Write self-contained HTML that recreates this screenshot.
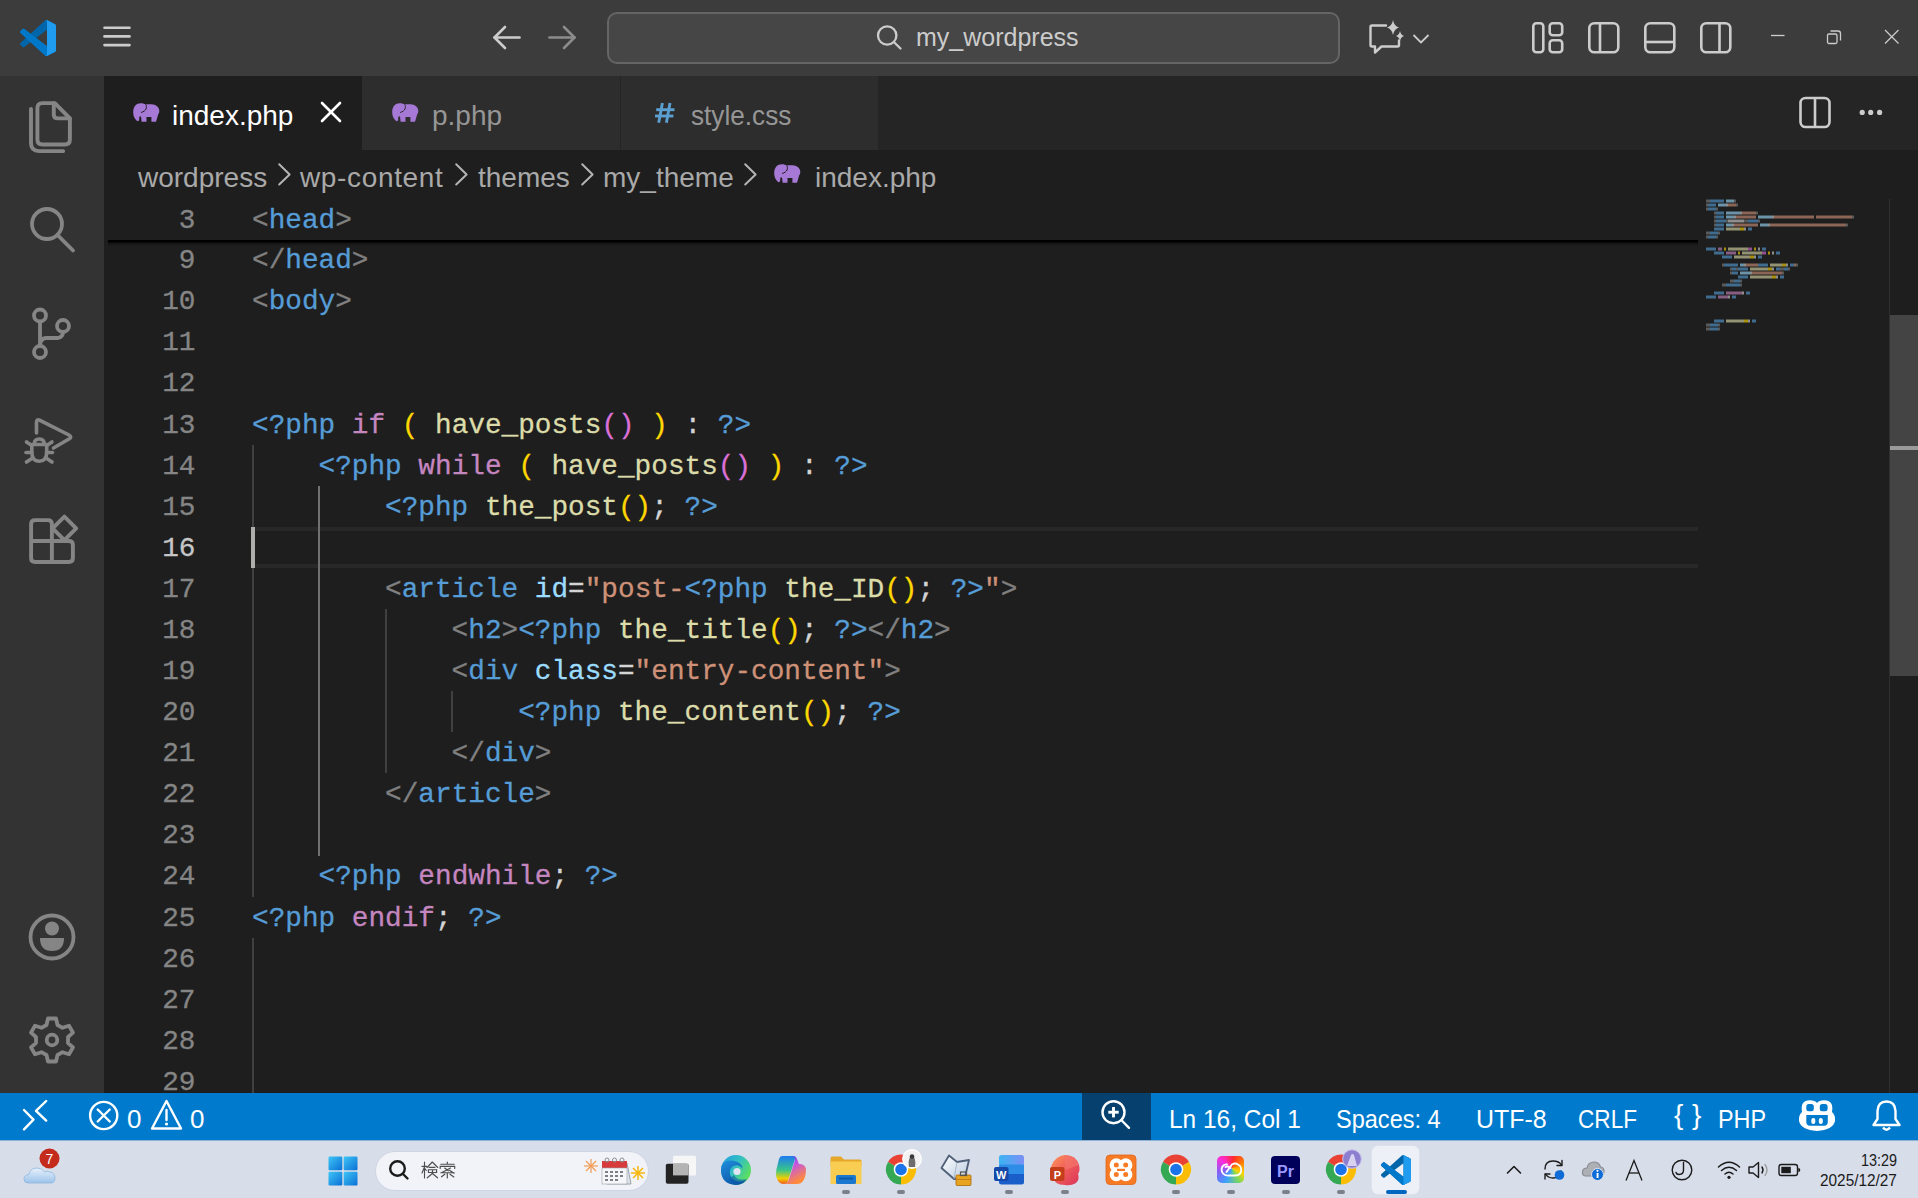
<!DOCTYPE html><html><head><meta charset="utf-8"><title>VS Code</title><style>html,body{margin:0;padding:0;width:1918px;height:1198px;overflow:hidden;background:#1e1e1e;font-family:"Liberation Sans",sans-serif;}
.a{position:absolute;}
svg{position:absolute;overflow:visible;}
#title{left:0;top:0;width:1918px;height:76px;background:#3c3c3c;}
#act{left:0;top:76px;width:104px;height:1017px;background:#333333;}
#tabbar{left:104px;top:76px;width:1814px;height:74px;background:#252526;}
.tab{top:76px;height:74px;background:#2d2d2d;}
.tabtxt{top:97px;font-size:28px;line-height:38px;color:#969696;white-space:pre;}
#bc{left:104px;top:150px;width:1814px;height:48px;background:#1e1e1e;}
.bct{top:158.5px;font-size:28px;line-height:38px;color:#a9a9a9;white-space:pre;}
#ed{left:104px;top:198px;width:1814px;height:895px;background:#1e1e1e;overflow:hidden;}
.ln{position:absolute;left:0;-webkit-text-stroke:0.3px;width:91.5px;text-align:right;font-family:"Liberation Mono",monospace;font-size:27.72px;line-height:41.04px;color:#858585;white-space:pre;}
.ln.cur{color:#c6c6c6;}
.code{position:absolute;left:148px;-webkit-text-stroke:0.3px;font-family:"Liberation Mono",monospace;font-size:27.72px;line-height:41.04px;color:#d4d4d4;white-space:pre;}
.guide{position:absolute;width:2px;background:#404040;}
.guide.act{background:#707070;}
#curline{position:absolute;left:148px;width:1446px;height:33px;border-top:4px solid #282828;border-bottom:4px solid #282828;}
#cursor{position:absolute;left:147px;width:4px;height:41px;background:#aeafad;}
#sticky{position:absolute;left:0;top:0;width:1594px;height:42px;background:#1e1e1e;}
#stickyshadow{position:absolute;left:4px;top:42px;width:1590px;height:6px;background:linear-gradient(#000 0,#000 1.5px,rgba(0,0,0,0.35) 3.5px,rgba(0,0,0,0) 6px);}
#status{left:0;top:1093px;width:1918px;height:47px;background:#007acc;}
.st{top:1101.5px;font-size:26px;line-height:34px;color:#fff;white-space:pre;}
#taskbar{left:0;top:1140px;width:1918px;height:58px;background:#d7dde9;}
</style></head><body>
<!-- TITLE BAR -->
<div class="a" id="title"></div>
<svg style="left:20px;top:20px" width="36" height="36" viewBox="0 0 100 100">
<path fill="#0065a9" d="M96.46 10.8L75.86.9C73.47-.25 70.62.24 68.74 2.12L29.36 38.04 12.19 25.01c-1.6-1.21-3.84-1.11-5.32.24l-5.51 5.01c-1.82 1.65-1.82 4.51 0 6.16L16.25 50 1.36 63.58c-1.82 1.65-1.82 4.51 0 6.16l5.51 5.01c1.48 1.35 3.72 1.45 5.32.24l17.17-13.03 39.38 35.92c1.88 1.88 4.73 2.37 7.12 1.22l20.59-9.91c2.16-1.04 3.54-3.23 3.54-5.63V16.41c0-2.4-1.38-4.59-3.54-5.63zM75.02 72.7L45.11 50l29.91-22.7v45.4z"/>
<path fill="#007acc" d="M96.46 89.2L75.86 99.1c-2.38 1.15-5.24.66-7.12-1.22L1.36 36.42c-1.82-1.65-1.82-4.51 0-6.16l5.51-5.01c1.48-1.35 3.72-1.45 5.32-.24l81.3 61.68c2.72 2.06 6.64.12 6.64-3.29V83.2c0 2.4-1.38 4.59-3.54 5.63z" opacity="0.9"/>
<path fill="#1f9cf0" d="M75.86 99.13c-2.38 1.15-5.24.66-7.12-1.22 2.32 2.32 6.28.68 6.28-2.6V4.69c0-3.28-3.96-4.92-6.28-2.6 1.88-1.88 4.73-2.37 7.12-1.22l20.59 9.9c2.16 1.04 3.54 3.23 3.54 5.63v67.17c0 2.4-1.38 4.59-3.54 5.63l-20.59 9.93z"/>
</svg>
<svg style="left:100px;top:24px" width="34" height="26" viewBox="0 0 34 26"><g stroke="#cccccc" stroke-width="2.6" stroke-linecap="round"><line x1="4.5" y1="3.8" x2="29.5" y2="3.8"/><line x1="4.5" y1="12.4" x2="29.5" y2="12.4"/><line x1="4.5" y1="21.1" x2="29.5" y2="21.1"/></g></svg>
<svg style="left:490px;top:24px" width="34" height="28" viewBox="0 0 34 28"><g stroke="#cccccc" stroke-width="2.6" stroke-linecap="round" stroke-linejoin="round" fill="none"><line x1="4.5" y1="13.5" x2="29.5" y2="13.5"/><polyline points="15,3 4.5,13.5 15,24"/></g></svg>
<svg style="left:546px;top:24px" width="34" height="28" viewBox="0 0 34 28"><g stroke="#8c8c8c" stroke-width="2.6" stroke-linecap="round" stroke-linejoin="round" fill="none"><line x1="3.5" y1="13.5" x2="28.5" y2="13.5"/><polyline points="18,3 28.5,13.5 18,24"/></g></svg>
<div class="a" style="left:607px;top:12px;width:729px;height:48px;border:2px solid #656565;border-radius:10px;background:#464646;"></div>
<svg style="left:872px;top:21px" width="34" height="32" viewBox="0 0 34 32"><g stroke="#cccccc" stroke-width="2.3" fill="none" stroke-linecap="round"><circle cx="15.2" cy="14.5" r="9.2"/><line x1="21.8" y1="21" x2="28.5" y2="27.5"/></g></svg>
<div class="a" style="left:916px;top:20px;font-size:25px;line-height:34px;color:#cccccc;white-space:pre;">my_wordpress</div>
<!-- chat icon -->
<svg style="left:1366px;top:18px" width="70" height="38" viewBox="0 0 70 38"><g stroke="#cccccc" stroke-width="2.4" fill="none" stroke-linejoin="round" stroke-linecap="round"><path d="M20 7.5 H6 Q4.5 7.5 4.5 9 V27 Q4.5 28.5 6 28.5 H9 L9 34.5 L15.5 28.5 H31.5 Q33 28.5 33 27 V22.5"/></g><polyline points="47.5,17 55,24.5 62.5,17" stroke="#cccccc" stroke-width="1.8" fill="none"/>
<path fill="#cccccc" d="M27 2 Q28 8 33 9.5 Q28 11 27 17 Q26 11 21 9.5 Q26 8 27 2Z"/>
<path fill="#cccccc" d="M34 13 Q34.8 17 38 18 Q34.8 19 34 23 Q33.2 19 30 18 Q33.2 17 34 13Z"/></svg>
<!-- layout icons -->
<svg style="left:1530px;top:20px" width="36" height="36" viewBox="0 0 36 36"><g stroke="#cccccc" stroke-width="2.6" fill="none"><rect x="3.3" y="3.3" width="10" height="29" rx="3"/><rect x="19.7" y="3.3" width="12.5" height="12" rx="3"/><rect x="19.7" y="20.3" width="12.5" height="12" rx="3"/></g></svg>
<svg style="left:1586px;top:20px" width="36" height="36" viewBox="0 0 36 36"><g stroke="#cccccc" stroke-width="2.6" fill="none"><rect x="3.3" y="3.3" width="29" height="29" rx="5"/><line x1="14" y1="3.3" x2="14" y2="32.3"/></g></svg>
<svg style="left:1642px;top:20px" width="36" height="36" viewBox="0 0 36 36"><g stroke="#cccccc" stroke-width="2.6" fill="none"><rect x="3.3" y="3.3" width="29" height="29" rx="5"/><line x1="3.3" y1="22" x2="32.3" y2="22"/></g></svg>
<svg style="left:1698px;top:20px" width="36" height="36" viewBox="0 0 36 36"><g stroke="#cccccc" stroke-width="2.6" fill="none"><rect x="3.3" y="3.3" width="29" height="29" rx="5"/><line x1="21.5" y1="3.3" x2="21.5" y2="32.3"/></g></svg>
<!-- window controls -->
<svg style="left:1766px;top:26px" width="24" height="20" viewBox="0 0 24 20"><line x1="5" y1="9.5" x2="18.5" y2="9.5" stroke="#cccccc" stroke-width="1.3"/></svg>
<svg style="left:1822px;top:25px" width="24" height="24" viewBox="0 0 24 24"><g stroke="#cccccc" stroke-width="1.3" fill="none"><rect x="5.5" y="9" width="9.5" height="9.5" rx="1.5"/><path d="M8.5 6 H16 Q18.5 6 18.5 8.5 V15.5"/></g></svg>
<svg style="left:1879px;top:24px" width="26" height="26" viewBox="0 0 26 26"><g stroke="#cccccc" stroke-width="1.3"><line x1="6" y1="6" x2="19.5" y2="19.5"/><line x1="19.5" y1="6" x2="6" y2="19.5"/></g></svg>

<!-- ACTIVITY BAR -->
<div class="a" id="act"></div>
<svg style="left:24px;top:98px" width="56" height="58" viewBox="0 0 56 58"><g stroke="#858585" stroke-width="3.9" fill="none" stroke-linejoin="round" stroke-linecap="round"><path d="M30.8 5.1 H18.4 Q13.4 5.1 13.4 10.1 V41.5 Q13.4 46.5 18.4 46.5 H40.9 Q45.9 46.5 45.9 41.5 V20.4 Z"/><path d="M29.8 5.1 V16.4 Q29.8 20.4 33.8 20.4 H45.9"/><path d="M7 11 V45.1 Q7 53.1 15 53.1 H39.2"/></g></svg>
<svg style="left:24px;top:203px" width="56" height="56" viewBox="0 0 56 56"><g stroke="#858585" stroke-width="3.8" fill="none" stroke-linecap="round"><circle cx="23" cy="21" r="15"/><line x1="33.5" y1="32" x2="49" y2="47.5"/></g></svg>
<svg style="left:24px;top:306px" width="56" height="58" viewBox="0 0 56 58"><g stroke="#858585" stroke-width="3.8" fill="none"><circle cx="16" cy="9.5" r="6"/><circle cx="16" cy="46" r="6"/><circle cx="39" cy="20" r="6"/><path d="M16 15.5 V40"/><path d="M39 26 Q39 31 34 32 H22 Q16 32.5 16 40"/></g></svg>
<svg style="left:22px;top:414px" width="60" height="54" viewBox="0 0 60 54"><g stroke="#858585" stroke-width="3.6" fill="none" stroke-linejoin="round" stroke-linecap="round"><path d="M14.5 19 V8.5 Q14.5 4.5 18 6.3 L47 21 Q50.5 23 47 25 L31.5 34"/><path d="M9.8 30.5 H24.7 V38 Q24.7 47.2 17.25 47.2 Q9.8 47.2 9.8 38 Z"/><path d="M12.3 30 Q12.3 25 17.25 25 Q22.2 25 22.2 30"/><line x1="4.5" y1="28" x2="9.8" y2="31.5"/><line x1="30" y1="28" x2="24.7" y2="31.5"/><line x1="4" y1="38.5" x2="9.8" y2="38.5"/><line x1="30.5" y1="38.5" x2="24.7" y2="38.5"/><line x1="4.5" y1="48" x2="9.8" y2="44.5"/><line x1="30" y1="48" x2="24.7" y2="44.5"/></g></svg>
<svg style="left:24px;top:512px" width="58" height="56" viewBox="0 0 58 56"><g stroke="#858585" stroke-width="3.9" fill="none" stroke-linejoin="round"><path d="M27.9 29 H44.9 Q48.9 29 48.9 33 V46 Q48.9 50 44.9 50 H11.1 Q7.1 50 7.1 46 V12.1 Q7.1 8.1 11.1 8.1 H23.9 Q27.9 8.1 27.9 12.1 V50 M7.1 29 H27.9"/><path d="M40.4 4.6 L52.2 16.4 L40.4 28.2 L28.6 16.4 Z"/></g></svg>
<svg style="left:24px;top:909px" width="56" height="56" viewBox="0 0 56 56"><g fill="none" stroke="#858585" stroke-width="3.8"><circle cx="28" cy="28" r="21.5"/></g><g fill="#858585"><circle cx="28" cy="19.5" r="7"/><path d="M16 29 H40 Q40 42 28 42 Q16 42 16 29 Z"/></g></svg>
<svg style="left:24px;top:1012px" width="56" height="56" viewBox="0 0 56 56"><g fill="none" stroke="#858585" stroke-width="3.8" stroke-linejoin="round"><path d="M24 6.5 H32 L33.5 13 L38.5 15.8 L45 13.7 L49 20.6 L44 25 V31 L49 35.4 L45 42.3 L38.5 40.2 L33.5 43 L32 49.5 H24 L22.5 43 L17.5 40.2 L11 42.3 L7 35.4 L12 31 V25 L7 20.6 L11 13.7 L17.5 15.8 L22.5 13 Z"/><circle cx="28" cy="28" r="5.3"/></g></svg>

<!-- TABS -->
<div class="a" id="tabbar"></div>
<div class="a tab" style="left:104px;width:258px;background:#1e1e1e;"></div>
<div class="a tab" style="left:362px;width:258px;"></div>
<div class="a tab" style="left:621px;width:257px;"></div>
<svg style="left:133px;top:103px" width="26" height="19" viewBox="0 0 26 19"><path fill="#a679d6" d="M0.2 9C0.2 3.5 3.5 0.3 7.6 0.3C10 0.3 11.8 0.8 12.8 1.8C14 1.2 15.5 1.2 18.4 1.3C23 1.5 26.3 4 26.3 8C26.3 9.5 25.8 10.5 25.3 11L23 18.8L18.4 18.8L18.4 13.9L13.5 13.9L13.5 18.8L8.6 18.8L8.1 14C7.5 13 6.6 13 6.3 14L6.2 16.5C6 18.3 4.5 18.6 3.6 17.6C1.2 15.5 0.2 12.5 0.2 9Z"/><path d="M12.8 1.8C14.2 4 13.6 8 8.1 9.5" stroke="#1e1e1e" stroke-width="1" fill="none"/></svg>
<div class="a tabtxt" style="left:172px;color:#ffffff;">index.php</div>
<svg style="left:316px;top:98px" width="30" height="30" viewBox="0 0 30 30"><g stroke="#ffffff" stroke-width="2.6" stroke-linecap="round"><line x1="6" y1="5" x2="24" y2="23"/><line x1="24" y1="5" x2="6" y2="23"/></g></svg>
<svg style="left:392px;top:103px" width="26" height="19" viewBox="0 0 26 19"><path fill="#a679d6" d="M0.2 9C0.2 3.5 3.5 0.3 7.6 0.3C10 0.3 11.8 0.8 12.8 1.8C14 1.2 15.5 1.2 18.4 1.3C23 1.5 26.3 4 26.3 8C26.3 9.5 25.8 10.5 25.3 11L23 18.8L18.4 18.8L18.4 13.9L13.5 13.9L13.5 18.8L8.6 18.8L8.1 14C7.5 13 6.6 13 6.3 14L6.2 16.5C6 18.3 4.5 18.6 3.6 17.6C1.2 15.5 0.2 12.5 0.2 9Z"/><path d="M12.8 1.8C14.2 4 13.6 8 8.1 9.5" stroke="#2d2d2d" stroke-width="1" fill="none"/></svg>
<div class="a tabtxt" style="left:432px;">p.php</div>
<svg style="left:652px;top:100px" width="26" height="26" viewBox="0 0 26 26"><g stroke="#5a9fcf" stroke-width="2.9" stroke-linecap="butt"><line x1="10.4" y1="3" x2="6.7" y2="22.7"/><line x1="18" y1="3" x2="14.4" y2="22.7"/><line x1="4.2" y1="9.7" x2="22.5" y2="9.7"/><line x1="3" y1="16" x2="21.4" y2="16"/></g></svg>
<div class="a tabtxt" style="left:691px;transform:scaleX(0.935);transform-origin:0 0;">style.css</div>
<svg style="left:1796px;top:94px" width="38" height="38" viewBox="0 0 38 38"><g stroke="#cccccc" stroke-width="2.6" fill="none"><rect x="4.5" y="4" width="29" height="29" rx="5"/><line x1="19" y1="4" x2="19" y2="33"/></g></svg>
<svg style="left:1856px;top:106px" width="30" height="14" viewBox="0 0 30 14"><g fill="#cccccc"><circle cx="6.2" cy="6.4" r="2.6"/><circle cx="14.7" cy="6.4" r="2.6"/><circle cx="23.6" cy="6.4" r="2.6"/></g></svg>

<!-- BREADCRUMBS -->
<div class="a" id="bc"></div>
<div class="a bct" style="left:138px;">wordpress</div>
<div class="a bct" style="left:300px;letter-spacing:0.65px;">wp-content</div>
<div class="a bct" style="left:478px;">themes</div>
<div class="a bct" style="left:603px;">my_theme</div>
<div class="a bct" style="left:815px;">index.php</div>
<svg style="left:270px;top:162px" width="30" height="30" viewBox="0 0 30 30"><polyline points="9.2,2.2 19.6,12.5 9.2,22.5" stroke="#b4b4b4" stroke-width="2" fill="none" stroke-linecap="round" stroke-linejoin="round"/></svg>
<svg style="left:447px;top:162px" width="30" height="30" viewBox="0 0 30 30"><polyline points="9.2,2.2 19.6,12.5 9.2,22.5" stroke="#b4b4b4" stroke-width="2" fill="none" stroke-linecap="round" stroke-linejoin="round"/></svg>
<svg style="left:573px;top:162px" width="30" height="30" viewBox="0 0 30 30"><polyline points="9.2,2.2 19.6,12.5 9.2,22.5" stroke="#b4b4b4" stroke-width="2" fill="none" stroke-linecap="round" stroke-linejoin="round"/></svg>
<svg style="left:736px;top:162px" width="30" height="30" viewBox="0 0 30 30"><polyline points="9.2,2.2 19.6,12.5 9.2,22.5" stroke="#b4b4b4" stroke-width="2" fill="none" stroke-linecap="round" stroke-linejoin="round"/></svg>
<svg style="left:774px;top:164px" width="26" height="19" viewBox="0 0 26 19"><path fill="#a679d6" d="M0.2 9C0.2 3.5 3.5 0.3 7.6 0.3C10 0.3 11.8 0.8 12.8 1.8C14 1.2 15.5 1.2 18.4 1.3C23 1.5 26.3 4 26.3 8C26.3 9.5 25.8 10.5 25.3 11L23 18.8L18.4 18.8L18.4 13.9L13.5 13.9L13.5 18.8L8.6 18.8L8.1 14C7.5 13 6.6 13 6.3 14L6.2 16.5C6 18.3 4.5 18.6 3.6 17.6C1.2 15.5 0.2 12.5 0.2 9Z"/><path d="M12.8 1.8C14.2 4 13.6 8 8.1 9.5" stroke="#1e1e1e" stroke-width="1" fill="none"/></svg>

<div class="a" id="ed">
<div id="curline" style="top:329.00px"></div>
<div class="guide" style="left:147.5px;top:246.84px;height:451.88px"></div>
<div class="guide" style="left:147.5px;top:739.80px;height:164.32px"></div>
<div class="guide act" style="left:214.0px;top:287.92px;height:369.72px"></div>
<div class="guide" style="left:280.5px;top:411.16px;height:164.32px"></div>
<div class="guide" style="left:347.0px;top:493.32px;height:41.08px"></div>
<div class="ln" style="top:42.24px">9</div>
<div class="code" style="top:42.24px"><span style="color:#808080">&lt;/</span><span style="color:#569cd6">head</span><span style="color:#808080">&gt;</span></div>
<div class="ln" style="top:83.32px">10</div>
<div class="code" style="top:83.32px"><span style="color:#808080">&lt;</span><span style="color:#569cd6">body</span><span style="color:#808080">&gt;</span></div>
<div class="ln" style="top:124.40px">11</div>
<div class="ln" style="top:165.48px">12</div>
<div class="ln" style="top:206.56px">13</div>
<div class="code" style="top:206.56px"><span style="color:#569cd6">&lt;?php</span><span style="color:#d4d4d4"> </span><span style="color:#c586c0">if</span><span style="color:#d4d4d4"> </span><span style="color:#ffd700">(</span><span style="color:#d4d4d4"> </span><span style="color:#dcdcaa">have_posts</span><span style="color:#da70d6">()</span><span style="color:#d4d4d4"> </span><span style="color:#ffd700">)</span><span style="color:#d4d4d4"> : </span><span style="color:#569cd6">?&gt;</span></div>
<div class="ln" style="top:247.64px">14</div>
<div class="code" style="top:247.64px">    <span style="color:#569cd6">&lt;?php</span><span style="color:#d4d4d4"> </span><span style="color:#c586c0">while</span><span style="color:#d4d4d4"> </span><span style="color:#ffd700">(</span><span style="color:#d4d4d4"> </span><span style="color:#dcdcaa">have_posts</span><span style="color:#da70d6">()</span><span style="color:#d4d4d4"> </span><span style="color:#ffd700">)</span><span style="color:#d4d4d4"> : </span><span style="color:#569cd6">?&gt;</span></div>
<div class="ln" style="top:288.72px">15</div>
<div class="code" style="top:288.72px">        <span style="color:#569cd6">&lt;?php</span><span style="color:#d4d4d4"> </span><span style="color:#dcdcaa">the_post</span><span style="color:#ffd700">()</span><span style="color:#d4d4d4">; </span><span style="color:#569cd6">?&gt;</span></div>
<div class="ln cur" style="top:329.80px">16</div>
<div class="ln" style="top:370.88px">17</div>
<div class="code" style="top:370.88px">        <span style="color:#808080">&lt;</span><span style="color:#569cd6">article</span><span style="color:#d4d4d4"> </span><span style="color:#9cdcfe">id</span><span style="color:#d4d4d4">=</span><span style="color:#ce9178">&quot;post-</span><span style="color:#569cd6">&lt;?php</span><span style="color:#d4d4d4"> </span><span style="color:#dcdcaa">the_ID</span><span style="color:#ffd700">()</span><span style="color:#d4d4d4">; </span><span style="color:#569cd6">?&gt;</span><span style="color:#ce9178">&quot;</span><span style="color:#808080">&gt;</span></div>
<div class="ln" style="top:411.96px">18</div>
<div class="code" style="top:411.96px">            <span style="color:#808080">&lt;</span><span style="color:#569cd6">h2</span><span style="color:#808080">&gt;</span><span style="color:#569cd6">&lt;?php</span><span style="color:#d4d4d4"> </span><span style="color:#dcdcaa">the_title</span><span style="color:#ffd700">()</span><span style="color:#d4d4d4">; </span><span style="color:#569cd6">?&gt;</span><span style="color:#808080">&lt;/</span><span style="color:#569cd6">h2</span><span style="color:#808080">&gt;</span></div>
<div class="ln" style="top:453.04px">19</div>
<div class="code" style="top:453.04px">            <span style="color:#808080">&lt;</span><span style="color:#569cd6">div</span><span style="color:#d4d4d4"> </span><span style="color:#9cdcfe">class</span><span style="color:#d4d4d4">=</span><span style="color:#ce9178">&quot;entry-content&quot;</span><span style="color:#808080">&gt;</span></div>
<div class="ln" style="top:494.12px">20</div>
<div class="code" style="top:494.12px">                <span style="color:#569cd6">&lt;?php</span><span style="color:#d4d4d4"> </span><span style="color:#dcdcaa">the_content</span><span style="color:#ffd700">()</span><span style="color:#d4d4d4">; </span><span style="color:#569cd6">?&gt;</span></div>
<div class="ln" style="top:535.20px">21</div>
<div class="code" style="top:535.20px">            <span style="color:#808080">&lt;/</span><span style="color:#569cd6">div</span><span style="color:#808080">&gt;</span></div>
<div class="ln" style="top:576.28px">22</div>
<div class="code" style="top:576.28px">        <span style="color:#808080">&lt;/</span><span style="color:#569cd6">article</span><span style="color:#808080">&gt;</span></div>
<div class="ln" style="top:617.36px">23</div>
<div class="ln" style="top:658.44px">24</div>
<div class="code" style="top:658.44px">    <span style="color:#569cd6">&lt;?php</span><span style="color:#d4d4d4"> </span><span style="color:#c586c0">endwhile</span><span style="color:#d4d4d4">; </span><span style="color:#569cd6">?&gt;</span></div>
<div class="ln" style="top:699.52px">25</div>
<div class="code" style="top:699.52px"><span style="color:#569cd6">&lt;?php</span><span style="color:#d4d4d4"> </span><span style="color:#c586c0">endif</span><span style="color:#d4d4d4">; </span><span style="color:#569cd6">?&gt;</span></div>
<div class="ln" style="top:740.60px">26</div>
<div class="ln" style="top:781.68px">27</div>
<div class="ln" style="top:822.76px">28</div>
<div class="ln" style="top:863.84px">29</div>
<div id="cursor" style="top:329.00px"></div>
<div id="sticky">
<div class="ln" style="top:1.8px">3</div>
<div class="code" style="top:1.8px"><span style="color:#808080">&lt;</span><span style="color:#569cd6">head</span><span style="color:#808080">&gt;</span></div>
</div>
<div id="stickyshadow"></div>
<div class="a" style="left:1785px;top:1px;width:1px;height:894px;background:#2f2f2f"></div>
<div class="a" style="left:1786px;top:117px;width:28px;height:361px;background:#444444"></div>
<div class="a" style="left:1786px;top:248px;width:28px;height:4px;background:#9a9a9a"></div>
<svg style="left:0;top:0" width="1814" height="895" viewBox="0 0 1814 895">
<rect x="1602" y="1.5" width="4" height="3" fill="#808080" fill-opacity="0.62"/>
<rect x="1606" y="1.5" width="14" height="3" fill="#569cd6" fill-opacity="0.62"/>
<rect x="1622" y="1.5" width="8" height="3" fill="#9cdcfe" fill-opacity="0.62"/>
<rect x="1630" y="1.5" width="2" height="3" fill="#808080" fill-opacity="0.62"/>
<rect x="1602" y="5.5" width="2" height="3" fill="#808080" fill-opacity="0.62"/>
<rect x="1604" y="5.5" width="8" height="3" fill="#569cd6" fill-opacity="0.62"/>
<rect x="1614" y="5.5" width="8" height="3" fill="#9cdcfe" fill-opacity="0.62"/>
<rect x="1622" y="5.5" width="2" height="3" fill="#d4d4d4" fill-opacity="0.62"/>
<rect x="1624" y="5.5" width="8" height="3" fill="#ce9178" fill-opacity="0.62"/>
<rect x="1632" y="5.5" width="2" height="3" fill="#808080" fill-opacity="0.62"/>
<rect x="1602" y="9.5" width="2" height="3" fill="#808080" fill-opacity="0.62"/>
<rect x="1604" y="9.5" width="8" height="3" fill="#569cd6" fill-opacity="0.62"/>
<rect x="1612" y="9.5" width="2" height="3" fill="#808080" fill-opacity="0.62"/>
<rect x="1610" y="13.5" width="2" height="3" fill="#808080" fill-opacity="0.62"/>
<rect x="1612" y="13.5" width="8" height="3" fill="#569cd6" fill-opacity="0.62"/>
<rect x="1622" y="13.5" width="14" height="3" fill="#9cdcfe" fill-opacity="0.62"/>
<rect x="1636" y="13.5" width="2" height="3" fill="#d4d4d4" fill-opacity="0.62"/>
<rect x="1638" y="13.5" width="14" height="3" fill="#ce9178" fill-opacity="0.62"/>
<rect x="1652" y="13.5" width="2" height="3" fill="#808080" fill-opacity="0.62"/>
<rect x="1610" y="17.5" width="2" height="3" fill="#808080" fill-opacity="0.62"/>
<rect x="1612" y="17.5" width="8" height="3" fill="#569cd6" fill-opacity="0.62"/>
<rect x="1622" y="17.5" width="8" height="3" fill="#9cdcfe" fill-opacity="0.62"/>
<rect x="1630" y="17.5" width="2" height="3" fill="#d4d4d4" fill-opacity="0.62"/>
<rect x="1632" y="17.5" width="20" height="3" fill="#ce9178" fill-opacity="0.62"/>
<rect x="1654" y="17.5" width="14" height="3" fill="#9cdcfe" fill-opacity="0.62"/>
<rect x="1668" y="17.5" width="2" height="3" fill="#d4d4d4" fill-opacity="0.62"/>
<rect x="1670" y="17.5" width="40" height="3" fill="#ce9178" fill-opacity="0.62"/>
<rect x="1712" y="17.5" width="36" height="3" fill="#ce9178" fill-opacity="0.62"/>
<rect x="1748" y="17.5" width="2" height="3" fill="#808080" fill-opacity="0.62"/>
<rect x="1610" y="21.5" width="2" height="3" fill="#808080" fill-opacity="0.62"/>
<rect x="1612" y="21.5" width="10" height="3" fill="#569cd6" fill-opacity="0.62"/>
<rect x="1622" y="21.5" width="2" height="3" fill="#808080" fill-opacity="0.62"/>
<rect x="1624" y="21.5" width="16" height="3" fill="#d4d4d4" fill-opacity="0.62"/>
<rect x="1640" y="21.5" width="4" height="3" fill="#808080" fill-opacity="0.62"/>
<rect x="1644" y="21.5" width="10" height="3" fill="#569cd6" fill-opacity="0.62"/>
<rect x="1654" y="21.5" width="2" height="3" fill="#808080" fill-opacity="0.62"/>
<rect x="1610" y="25.5" width="2" height="3" fill="#808080" fill-opacity="0.62"/>
<rect x="1612" y="25.5" width="8" height="3" fill="#569cd6" fill-opacity="0.62"/>
<rect x="1622" y="25.5" width="6" height="3" fill="#9cdcfe" fill-opacity="0.62"/>
<rect x="1628" y="25.5" width="2" height="3" fill="#d4d4d4" fill-opacity="0.62"/>
<rect x="1630" y="25.5" width="24" height="3" fill="#ce9178" fill-opacity="0.62"/>
<rect x="1656" y="25.5" width="8" height="3" fill="#9cdcfe" fill-opacity="0.62"/>
<rect x="1664" y="25.5" width="2" height="3" fill="#d4d4d4" fill-opacity="0.62"/>
<rect x="1666" y="25.5" width="76" height="3" fill="#ce9178" fill-opacity="0.62"/>
<rect x="1742" y="25.5" width="2" height="3" fill="#808080" fill-opacity="0.62"/>
<rect x="1610" y="29.5" width="10" height="3" fill="#569cd6" fill-opacity="0.62"/>
<rect x="1622" y="29.5" width="14" height="3" fill="#dcdcaa" fill-opacity="0.62"/>
<rect x="1636" y="29.5" width="4" height="3" fill="#ffd700" fill-opacity="0.62"/>
<rect x="1640" y="29.5" width="2" height="3" fill="#d4d4d4" fill-opacity="0.62"/>
<rect x="1644" y="29.5" width="4" height="3" fill="#569cd6" fill-opacity="0.62"/>
<rect x="1602" y="33.5" width="4" height="3" fill="#808080" fill-opacity="0.62"/>
<rect x="1606" y="33.5" width="8" height="3" fill="#569cd6" fill-opacity="0.62"/>
<rect x="1614" y="33.5" width="2" height="3" fill="#808080" fill-opacity="0.62"/>
<rect x="1602" y="37.5" width="2" height="3" fill="#808080" fill-opacity="0.62"/>
<rect x="1604" y="37.5" width="8" height="3" fill="#569cd6" fill-opacity="0.62"/>
<rect x="1612" y="37.5" width="2" height="3" fill="#808080" fill-opacity="0.62"/>
<rect x="1602" y="49.5" width="10" height="3" fill="#569cd6" fill-opacity="0.62"/>
<rect x="1614" y="49.5" width="4" height="3" fill="#c586c0" fill-opacity="0.62"/>
<rect x="1620" y="49.5" width="2" height="3" fill="#ffd700" fill-opacity="0.62"/>
<rect x="1624" y="49.5" width="20" height="3" fill="#dcdcaa" fill-opacity="0.62"/>
<rect x="1644" y="49.5" width="4" height="3" fill="#da70d6" fill-opacity="0.62"/>
<rect x="1650" y="49.5" width="2" height="3" fill="#ffd700" fill-opacity="0.62"/>
<rect x="1654" y="49.5" width="2" height="3" fill="#d4d4d4" fill-opacity="0.62"/>
<rect x="1658" y="49.5" width="4" height="3" fill="#569cd6" fill-opacity="0.62"/>
<rect x="1610" y="53.5" width="10" height="3" fill="#569cd6" fill-opacity="0.62"/>
<rect x="1622" y="53.5" width="10" height="3" fill="#c586c0" fill-opacity="0.62"/>
<rect x="1634" y="53.5" width="2" height="3" fill="#ffd700" fill-opacity="0.62"/>
<rect x="1638" y="53.5" width="20" height="3" fill="#dcdcaa" fill-opacity="0.62"/>
<rect x="1658" y="53.5" width="4" height="3" fill="#da70d6" fill-opacity="0.62"/>
<rect x="1664" y="53.5" width="2" height="3" fill="#ffd700" fill-opacity="0.62"/>
<rect x="1668" y="53.5" width="2" height="3" fill="#d4d4d4" fill-opacity="0.62"/>
<rect x="1672" y="53.5" width="4" height="3" fill="#569cd6" fill-opacity="0.62"/>
<rect x="1618" y="57.5" width="10" height="3" fill="#569cd6" fill-opacity="0.62"/>
<rect x="1630" y="57.5" width="16" height="3" fill="#dcdcaa" fill-opacity="0.62"/>
<rect x="1646" y="57.5" width="4" height="3" fill="#ffd700" fill-opacity="0.62"/>
<rect x="1650" y="57.5" width="2" height="3" fill="#d4d4d4" fill-opacity="0.62"/>
<rect x="1654" y="57.5" width="4" height="3" fill="#569cd6" fill-opacity="0.62"/>
<rect x="1618" y="65.5" width="2" height="3" fill="#808080" fill-opacity="0.62"/>
<rect x="1620" y="65.5" width="14" height="3" fill="#569cd6" fill-opacity="0.62"/>
<rect x="1636" y="65.5" width="4" height="3" fill="#9cdcfe" fill-opacity="0.62"/>
<rect x="1640" y="65.5" width="2" height="3" fill="#d4d4d4" fill-opacity="0.62"/>
<rect x="1642" y="65.5" width="12" height="3" fill="#ce9178" fill-opacity="0.62"/>
<rect x="1654" y="65.5" width="10" height="3" fill="#569cd6" fill-opacity="0.62"/>
<rect x="1666" y="65.5" width="12" height="3" fill="#dcdcaa" fill-opacity="0.62"/>
<rect x="1678" y="65.5" width="4" height="3" fill="#ffd700" fill-opacity="0.62"/>
<rect x="1682" y="65.5" width="2" height="3" fill="#d4d4d4" fill-opacity="0.62"/>
<rect x="1686" y="65.5" width="4" height="3" fill="#569cd6" fill-opacity="0.62"/>
<rect x="1690" y="65.5" width="2" height="3" fill="#ce9178" fill-opacity="0.62"/>
<rect x="1692" y="65.5" width="2" height="3" fill="#808080" fill-opacity="0.62"/>
<rect x="1626" y="69.5" width="2" height="3" fill="#808080" fill-opacity="0.62"/>
<rect x="1628" y="69.5" width="4" height="3" fill="#569cd6" fill-opacity="0.62"/>
<rect x="1632" y="69.5" width="2" height="3" fill="#808080" fill-opacity="0.62"/>
<rect x="1634" y="69.5" width="10" height="3" fill="#569cd6" fill-opacity="0.62"/>
<rect x="1646" y="69.5" width="18" height="3" fill="#dcdcaa" fill-opacity="0.62"/>
<rect x="1664" y="69.5" width="4" height="3" fill="#ffd700" fill-opacity="0.62"/>
<rect x="1668" y="69.5" width="2" height="3" fill="#d4d4d4" fill-opacity="0.62"/>
<rect x="1672" y="69.5" width="4" height="3" fill="#569cd6" fill-opacity="0.62"/>
<rect x="1676" y="69.5" width="4" height="3" fill="#808080" fill-opacity="0.62"/>
<rect x="1680" y="69.5" width="4" height="3" fill="#569cd6" fill-opacity="0.62"/>
<rect x="1684" y="69.5" width="2" height="3" fill="#808080" fill-opacity="0.62"/>
<rect x="1626" y="73.5" width="2" height="3" fill="#808080" fill-opacity="0.62"/>
<rect x="1628" y="73.5" width="6" height="3" fill="#569cd6" fill-opacity="0.62"/>
<rect x="1636" y="73.5" width="10" height="3" fill="#9cdcfe" fill-opacity="0.62"/>
<rect x="1646" y="73.5" width="2" height="3" fill="#d4d4d4" fill-opacity="0.62"/>
<rect x="1648" y="73.5" width="30" height="3" fill="#ce9178" fill-opacity="0.62"/>
<rect x="1678" y="73.5" width="2" height="3" fill="#808080" fill-opacity="0.62"/>
<rect x="1634" y="77.5" width="10" height="3" fill="#569cd6" fill-opacity="0.62"/>
<rect x="1646" y="77.5" width="22" height="3" fill="#dcdcaa" fill-opacity="0.62"/>
<rect x="1668" y="77.5" width="4" height="3" fill="#ffd700" fill-opacity="0.62"/>
<rect x="1672" y="77.5" width="2" height="3" fill="#d4d4d4" fill-opacity="0.62"/>
<rect x="1676" y="77.5" width="4" height="3" fill="#569cd6" fill-opacity="0.62"/>
<rect x="1626" y="81.5" width="4" height="3" fill="#808080" fill-opacity="0.62"/>
<rect x="1630" y="81.5" width="6" height="3" fill="#569cd6" fill-opacity="0.62"/>
<rect x="1636" y="81.5" width="2" height="3" fill="#808080" fill-opacity="0.62"/>
<rect x="1618" y="85.5" width="4" height="3" fill="#808080" fill-opacity="0.62"/>
<rect x="1622" y="85.5" width="14" height="3" fill="#569cd6" fill-opacity="0.62"/>
<rect x="1636" y="85.5" width="2" height="3" fill="#808080" fill-opacity="0.62"/>
<rect x="1610" y="93.5" width="10" height="3" fill="#569cd6" fill-opacity="0.62"/>
<rect x="1622" y="93.5" width="16" height="3" fill="#c586c0" fill-opacity="0.62"/>
<rect x="1638" y="93.5" width="2" height="3" fill="#d4d4d4" fill-opacity="0.62"/>
<rect x="1642" y="93.5" width="4" height="3" fill="#569cd6" fill-opacity="0.62"/>
<rect x="1602" y="97.5" width="10" height="3" fill="#569cd6" fill-opacity="0.62"/>
<rect x="1614" y="97.5" width="10" height="3" fill="#c586c0" fill-opacity="0.62"/>
<rect x="1624" y="97.5" width="2" height="3" fill="#d4d4d4" fill-opacity="0.62"/>
<rect x="1628" y="97.5" width="4" height="3" fill="#569cd6" fill-opacity="0.62"/>
<rect x="1610" y="121.5" width="10" height="3" fill="#569cd6" fill-opacity="0.62"/>
<rect x="1622" y="121.5" width="18" height="3" fill="#dcdcaa" fill-opacity="0.62"/>
<rect x="1640" y="121.5" width="4" height="3" fill="#ffd700" fill-opacity="0.62"/>
<rect x="1644" y="121.5" width="2" height="3" fill="#d4d4d4" fill-opacity="0.62"/>
<rect x="1648" y="121.5" width="4" height="3" fill="#569cd6" fill-opacity="0.62"/>
<rect x="1602" y="125.5" width="4" height="3" fill="#808080" fill-opacity="0.62"/>
<rect x="1606" y="125.5" width="8" height="3" fill="#569cd6" fill-opacity="0.62"/>
<rect x="1614" y="125.5" width="2" height="3" fill="#808080" fill-opacity="0.62"/>
<rect x="1602" y="129.5" width="4" height="3" fill="#808080" fill-opacity="0.62"/>
<rect x="1606" y="129.5" width="8" height="3" fill="#569cd6" fill-opacity="0.62"/>
<rect x="1614" y="129.5" width="2" height="3" fill="#808080" fill-opacity="0.62"/>
</svg>
</div>
<!-- STATUS BAR -->
<div class="a" id="status"></div>
<div class="a" style="left:1082px;top:1093px;width:69px;height:47px;background:#05406e;"></div>
<svg style="left:18px;top:1098px" width="36" height="38" viewBox="0 0 36 38"><g stroke="#fff" stroke-width="2.4" fill="none" stroke-linecap="round" stroke-linejoin="round"><polyline points="6,12 15.5,21.7 6,31.4"/><polyline points="28.2,3 18,12.8 28.2,22.6"/></g></svg>
<svg style="left:84px;top:1097px" width="40" height="40" viewBox="0 0 40 40"><g stroke="#fff" stroke-width="2.4" fill="none" stroke-linecap="round"><circle cx="19.7" cy="18.5" r="13.6"/><line x1="13.7" y1="12.5" x2="25.7" y2="24.5"/><line x1="25.7" y1="12.5" x2="13.7" y2="24.5"/></g></svg>
<div class="a st" style="left:127px;">0</div>
<svg style="left:148px;top:1097px" width="40" height="40" viewBox="0 0 40 40"><g stroke="#fff" stroke-width="2.4" fill="none" stroke-linejoin="round" stroke-linecap="round"><path d="M18.5 4 L33 31.5 H4 Z"/><line x1="18.5" y1="13" x2="18.5" y2="23"/></g><circle cx="18.5" cy="27" r="1.6" fill="#fff"/></svg>
<div class="a st" style="left:190px;">0</div>
<svg style="left:1096px;top:1096px" width="40" height="40" viewBox="0 0 40 40"><g stroke="#fff" stroke-width="2.4" fill="none" stroke-linecap="round"><circle cx="17.5" cy="16.2" r="11"/><line x1="25.3" y1="24" x2="33" y2="31.8"/><line x1="12.3" y1="16.2" x2="22.7" y2="16.2" stroke-width="2.9" stroke-linecap="butt"/><line x1="17.5" y1="11" x2="17.5" y2="21.4" stroke-width="2.9" stroke-linecap="butt"/></g></svg>
<div class="a st" style="left:1169px;transform:scaleX(0.94);transform-origin:0 0;">Ln 16, Col 1</div>
<div class="a st" style="left:1336px;transform:scaleX(0.905);transform-origin:0 0;">Spaces: 4</div>
<div class="a st" style="left:1476px;transform:scaleX(0.96);transform-origin:0 0;">UTF-8</div>
<div class="a st" style="left:1578px;transform:scaleX(0.87);transform-origin:0 0;">CRLF</div>
<div class="a st" style="left:1674px;top:1098px;font-size:28px;">{</div><div class="a st" style="left:1692px;top:1098px;font-size:28px;">}</div>
<div class="a st" style="left:1718px;transform:scaleX(0.90);transform-origin:0 0;">PHP</div>
<svg style="left:1796px;top:1098px" width="42" height="36" viewBox="0 0 42 36"><path fill="#fff" d="M6 14 Q4 2 14 2.2 Q19 2.2 21 5 Q23 2.2 28 2.2 Q38 2 36 14 Q39.5 17 39 23 Q37 31.8 21 33 Q5 31.8 3 23 Q2.5 17 6 14Z"/><g fill="#007acc"><rect x="10.3" y="6" width="7.5" height="7.3" rx="2.5"/><rect x="23.8" y="6" width="7.8" height="7.3" rx="2.5"/><path d="M10.3 16.9 H31.8 V24 Q31.8 27.7 28 27.7 H14 Q10.3 27.7 10.3 24Z"/></g><g fill="#fff"><rect x="15.3" y="20" width="4" height="6" rx="2"/><rect x="22.8" y="20" width="4" height="6" rx="2"/></g></svg>
<svg style="left:1870px;top:1098px" width="34" height="36" viewBox="0 0 34 36"><g stroke="#fff" stroke-width="2.4" fill="none" stroke-linejoin="round"><path d="M16.5 3.5 Q8 3.5 7.5 13 V21 L3.5 27 H29.5 L25.5 21 V13 Q25 3.5 16.5 3.5 Z"/><path d="M13 29.5 Q16.5 34 20 29.5"/></g></svg>

<!-- TASKBAR -->
<div class="a" id="taskbar"></div>
<div class="a" style="left:0;top:1140px;width:1918px;height:1px;background:#90b1d6;"></div>
<!-- weather -->
<svg style="left:20px;top:1144px" width="44" height="44" viewBox="0 0 44 44">
<defs><linearGradient id="cl" x1="0" y1="0" x2="0" y2="1"><stop offset="0" stop-color="#e8f1fb"/><stop offset="1" stop-color="#9cc3ea"/></linearGradient></defs>
<path fill="url(#cl)" stroke="#8fb6e0" stroke-width="0.8" d="M8 39 Q4 39 4 35 Q4 31 9 30.5 Q10 24 17 24 Q22 24 24.5 28 Q27 26.5 30 28 Q35 29 35 34 Q35 39 31 39 Z"/>
<circle cx="29.5" cy="14.5" r="10" fill="#c42b1c"/>
<text x="29.5" y="20" font-family="Liberation Sans" font-size="14" fill="#fff" text-anchor="middle">7</text>
</svg>
<!-- windows logo -->
<svg style="left:328px;top:1156px" width="30" height="30" viewBox="0 0 30 30">
<defs><linearGradient id="wl" x1="0" y1="0" x2="1" y2="1"><stop offset="0" stop-color="#3ec6f5"/><stop offset="1" stop-color="#0a6fd6"/></linearGradient></defs>
<g fill="url(#wl)"><rect x="0.5" y="0.5" width="13.8" height="13.8" rx="1.2"/><rect x="15.7" y="0.5" width="13.8" height="13.8" rx="1.2"/><rect x="0.5" y="15.7" width="13.8" height="13.8" rx="1.2"/><rect x="15.7" y="15.7" width="13.8" height="13.8" rx="1.2"/></g></svg>
<!-- search pill -->
<div class="a" style="left:375px;top:1151px;width:272px;height:38px;border-radius:20px;background:#f1f3f9;border:1px solid #cfd6e3;"></div>
<svg style="left:386px;top:1157px" width="26" height="26" viewBox="0 0 26 26"><g stroke="#1b1b1b" stroke-width="2.4" fill="none" stroke-linecap="round"><circle cx="11.5" cy="11.5" r="7.3"/><line x1="17" y1="17" x2="21.5" y2="21.5"/></g></svg>
<svg style="left:420px;top:1160px" width="38" height="22" viewBox="0 0 38 22"><g stroke="#4e4e4e" stroke-width="1.15" fill="none" stroke-linecap="round"><path d="M2 6.4 H6.6 M4.5 2 V18 M4.5 7 L2 13 M4.8 8.5 L6.3 10.3"/><path d="M12.3 2 L7 7.5 M12.3 2 L17.7 7.5 M9 7.3 H15 M8.4 9.7 H16.6 V12.5 H8.4 Z M12.5 9.7 V14 M12.3 13.5 L7.3 17.8 M12.6 13.5 L17.5 17.8"/><path d="M27.3 2 V4.2 M20.8 4.2 H34.2 M20.2 8.5 V6.3 H34.7 V8.5 M24.7 8 L28.3 10.8 M30.5 8 L21.5 12.7 M20.8 12.7 H34.2 M29.5 10.3 L34 13.3 M27.3 12.7 V18 M24.8 14.2 L21.5 16.8 M30 14.2 L33.8 17"/></g></svg>
<svg style="left:583px;top:1155px" width="62" height="32" viewBox="0 0 62 32">
<g stroke="#f49b54" stroke-width="1.2"><line x1="8" y1="4" x2="8" y2="18"/><line x1="1" y1="11" x2="15" y2="11"/><line x1="3" y1="6" x2="13" y2="16"/><line x1="13" y1="6" x2="3" y2="16"/></g>
<g stroke="#f5b400" stroke-width="1.4"><line x1="55" y1="11" x2="55" y2="25"/><line x1="48" y1="18" x2="62" y2="18"/><line x1="50" y1="13" x2="60" y2="23"/><line x1="60" y1="13" x2="50" y2="23"/></g>
<path d="M20 8 H44 L48 29 H24 Z" fill="#dfe3ea" stroke="#8a8f98" stroke-width="0.8"/>
<rect x="19" y="6" width="25" height="7" fill="#d83b3b"/>
<rect x="19" y="13" width="25" height="16" fill="#f5f6f8" stroke="#9aa0a8" stroke-width="0.6"/>
<g fill="#7a7f88"><rect x="22" y="16" width="3" height="2"/><rect x="27" y="16" width="3" height="2"/><rect x="32" y="16" width="3" height="2"/><rect x="37" y="16" width="3" height="2"/><rect x="22" y="20" width="3" height="2"/><rect x="27" y="20" width="3" height="2"/><rect x="32" y="20" width="3" height="2"/><rect x="37" y="20" width="3" height="2"/><rect x="22" y="24" width="3" height="2"/><rect x="27" y="24" width="3" height="2"/><rect x="32" y="24" width="3" height="2"/></g>
<g fill="none" stroke="#8a8f98" stroke-width="1"><circle cx="24" cy="5" r="2"/><circle cx="31.5" cy="5" r="2"/><circle cx="39" cy="5" r="2"/></g></svg>
<!-- task view -->
<svg style="left:665px;top:1155px" width="32" height="31" viewBox="0 0 32 31">
<rect x="8" y="0.8" width="23" height="19.6" rx="1.5" fill="#f6f6f6"/>
<rect x="0.8" y="8.7" width="22.7" height="20" rx="1.8" fill="#232323"/>
<rect x="8" y="8.7" width="15.5" height="11.7" fill="#b4b4b4"/></svg>
<!-- edge -->
<svg style="left:720px;top:1154px" width="32" height="32" viewBox="0 0 32 32">
<defs><linearGradient id="eg1" x1="0" y1="0" x2="1" y2="0.6"><stop offset="0" stop-color="#1b9de2"/><stop offset="0.55" stop-color="#35c1c0"/><stop offset="1" stop-color="#5ee05a"/></linearGradient>
<linearGradient id="eg2" x1="0" y1="0" x2="0.6" y2="1"><stop offset="0" stop-color="#1f8fdc"/><stop offset="1" stop-color="#0c56a8"/></linearGradient></defs>
<circle cx="16" cy="16" r="15" fill="url(#eg1)"/>
<path fill="url(#eg2)" d="M1 16 Q1 6 12 6.5 Q22 7.5 22.5 15 Q20 10.5 15 11.5 Q9 13 10 20 Q11 26 19 27.5 Q24 28 27 24.5 Q24 31 16 31 Q1 30 1 16Z"/>
<circle cx="17" cy="17.5" r="3.6" fill="#dfe5f2"/>
<path fill="#0d5aa8" d="M14 21 Q17 27 26 25 Q22 30.5 15.5 30.8 Q11 30 10 24 Z" opacity="0.6"/></svg>
<!-- copilot -->
<svg style="left:775px;top:1155px" width="32" height="30" viewBox="0 0 32 30">
<defs><linearGradient id="cp1" x1="0" y1="0" x2="0" y2="1"><stop offset="0" stop-color="#1e7bf0"/><stop offset="0.5" stop-color="#39c58a"/><stop offset="0.8" stop-color="#f0d000"/><stop offset="1" stop-color="#f25a1c"/></linearGradient>
<linearGradient id="cp2" x1="0" y1="0" x2="0.4" y2="1"><stop offset="0" stop-color="#2452d8"/><stop offset="0.4" stop-color="#c154e6"/><stop offset="1" stop-color="#ff8a3c"/></linearGradient></defs>
<path fill="url(#cp1)" d="M7 1 H18 Q21 1 20 4 L13 26 Q12 29 9 29 Q5 29 3 26 Q0 21 1.5 14 L4 4 Q5 1 7 1Z"/>
<path fill="url(#cp2)" d="M12 1 H18 Q21 1 22 4 L24 9 Q30 9 31 14 Q31 22 28 26 Q26 29 22 29 H10 Q13 28 14 24 L20 5 Q20 2 17 1Z"/></svg>
<!-- folder -->
<svg style="left:830px;top:1156px" width="32" height="29" viewBox="0 0 32 29">
<path fill="#e6a82a" d="M0.5 2 Q0.5 0.5 2 0.5 H11 L14 3.5 H30 Q31.5 3.5 31.5 5 V10 H0.5Z"/>
<path fill="#f8cd52" d="M0.5 5.5 H31.5 V27.5 Q31.5 28 31 28 H1 Q0.5 28 0.5 27.5Z"/>
<rect x="6" y="19" width="20" height="9" rx="1.5" fill="#1a79cf"/>
<rect x="9" y="21.5" width="14" height="2" fill="#0d5cab"/></svg>
<!-- chrome 1 -->
<svg style="left:885px;top:1153px" width="40" height="33" viewBox="0 0 40 33">
<g transform="translate(16,16.5)">
<path fill="#e94235" d="M0 0 L-13 -7.5 A15 15 0 0 1 13 -7.5Z"/><path fill="#fbbc04" d="M0 0 L13 -7.5 A15 15 0 0 1 0 15Z"/><path fill="#34a853" d="M0 0 L0 15 A15 15 0 0 1 -13 -7.5Z"/>
<circle r="7.3" fill="#fff"/><circle r="5.8" fill="#1a73e8"/></g>
<circle cx="27" cy="6" r="9.3" fill="#f2f2f2" stroke="#ffffff" stroke-width="1.2"/>
<path fill="#6d6d6d" d="M24 14 Q23 8 25 4 Q27 1 29 4 Q31 8 30 14 Z"/><circle cx="27" cy="3.5" r="2.3" fill="#3a3a3a"/></svg>
<!-- map + briefcase -->
<svg style="left:940px;top:1154px" width="34" height="33" viewBox="0 0 34 33">
<defs><linearGradient id="mp" x1="0" y1="0" x2="1" y2="1"><stop offset="0" stop-color="#ffffff"/><stop offset="1" stop-color="#b9cbe0"/></linearGradient></defs>
<path fill="url(#mp)" stroke="#4f5f77" stroke-width="1.8" stroke-linejoin="round" d="M9 1.5 L17 8 L29 6 L25 23 L14 25 L1.5 14 Z"/>
<path d="M17 8 L14 25" stroke="#9aaac0" stroke-width="0.8"/>
<rect x="16" y="21" width="15" height="10.5" rx="1" fill="#e8a320" stroke="#a86b08" stroke-width="0.8"/>
<rect x="20.5" y="18" width="6" height="3.5" fill="none" stroke="#555" stroke-width="1.2"/>
<line x1="16" y1="25.5" x2="31" y2="25.5" stroke="#b97a10" stroke-width="0.8"/></svg>
<!-- word -->
<svg style="left:993px;top:1154px" width="32" height="32" viewBox="0 0 32 32">
<defs><linearGradient id="wd1" x1="0" y1="0" x2="1" y2="0"><stop offset="0" stop-color="#3bb4f2"/><stop offset="1" stop-color="#7c8ff5"/></linearGradient></defs>
<rect x="6" y="1" width="25" height="10.5" rx="2.5" fill="url(#wd1)"/>
<rect x="6" y="10.5" width="25" height="10" fill="#2e8de6"/>
<path d="M6 20 H31 V28 Q31 30.5 28.5 30.5 H8.5 Q6 30.5 6 28Z" fill="#1a5fc9"/>
<rect x="1" y="13" width="14.5" height="14" rx="2" fill="#1449a8"/>
<text x="8.2" y="24.5" font-family="Liberation Sans" font-weight="bold" font-size="11" fill="#fff" text-anchor="middle">W</text></svg>
<!-- powerpoint -->
<svg style="left:1049px;top:1154px" width="32" height="32" viewBox="0 0 32 32">
<defs><linearGradient id="pp" x1="0" y1="0" x2="1" y2="1"><stop offset="0" stop-color="#ff9a5a"/><stop offset="0.5" stop-color="#ef5a5a"/><stop offset="1" stop-color="#d9345a"/></linearGradient></defs>
<path fill="url(#pp)" d="M16 1 Q27 1 30 11 Q31.5 16 29 20 Q31 25 27 29 Q22 32 16 31 Q5 31 2 21 Q0 10 8 4 Q12 1 16 1Z"/>
<path fill="#f4736a" d="M16 1 Q27 1 30 11 L16 16 Z" opacity="0.7"/>
<rect x="1" y="13" width="14.5" height="14" rx="2" fill="#c43e1c"/>
<text x="8.3" y="24.5" font-family="Liberation Sans" font-weight="bold" font-size="11" fill="#fff" text-anchor="middle">P</text></svg>
<!-- xampp -->
<svg style="left:1105px;top:1154px" width="32" height="32" viewBox="0 0 32 32">
<rect x="1" y="1" width="30" height="29.5" rx="4" fill="#f77a24" stroke="#e2661a" stroke-width="0.8"/>
<g fill="none" stroke="#ffffff" stroke-width="4.2"><circle cx="11.3" cy="11" r="4.6"/><circle cx="20.7" cy="11" r="4.6"/><circle cx="11.3" cy="20.5" r="4.6"/><circle cx="20.7" cy="20.5" r="4.6"/></g>
<rect x="12" y="14.8" width="8" height="2.2" fill="#f77a24"/></svg>
<!-- chrome 2 -->
<svg style="left:1160px;top:1153px" width="32" height="33" viewBox="0 0 32 33">
<g transform="translate(16,16.5)">
<path fill="#e94235" d="M0 0 L-13 -7.5 A15 15 0 0 1 13 -7.5Z"/><path fill="#fbbc04" d="M0 0 L13 -7.5 A15 15 0 0 1 0 15Z"/><path fill="#34a853" d="M0 0 L0 15 A15 15 0 0 1 -13 -7.5Z"/>
<circle r="7.3" fill="#fff"/><circle r="5.8" fill="#1a73e8"/></g></svg>
<!-- creative cloud -->
<div class="a" style="left:1217px;top:1156px;width:27px;height:27px;border-radius:5px;background:conic-gradient(from 10deg at 55% 45%, #ff2a2a 0deg, #ff8a00 60deg, #ffd400 105deg, #7ed957 140deg, #3aa0ff 195deg, #8b5cf6 245deg, #ff2bd6 300deg, #ff2a2a 360deg);"></div>
<svg style="left:1215px;top:1155px" width="32" height="30" viewBox="0 0 32 30">
<g fill="none" stroke="#fff" stroke-width="1.9" stroke-linecap="round"><path d="M12 9.5 Q9 9 7.5 11.5 Q5.5 15 8 18.5 Q10 21 14 20.5 H20 Q25 20.5 26 16.5 Q27 11.5 23 9.5 Q20 7.5 17 9.5 L11.5 17"/><path d="M10.5 12 Q13 10.5 15.5 13"/></g></svg>
<!-- premiere -->
<svg style="left:1270px;top:1155px" width="32" height="30" viewBox="0 0 32 30">
<rect x="1" y="1" width="29" height="28" rx="4" fill="#00005b"/>
<text x="15.5" y="22" font-family="Liberation Sans" font-weight="bold" font-size="16" fill="#9999ff" text-anchor="middle">Pr</text></svg>
<!-- chrome 3 -->
<svg style="left:1325px;top:1153px" width="40" height="33" viewBox="0 0 40 33">
<g transform="translate(16,16.5)">
<path fill="#e94235" d="M0 0 L-13 -7.5 A15 15 0 0 1 13 -7.5Z"/><path fill="#fbbc04" d="M0 0 L13 -7.5 A15 15 0 0 1 0 15Z"/><path fill="#34a853" d="M0 0 L0 15 A15 15 0 0 1 -13 -7.5Z"/>
<circle r="7.3" fill="#fff"/><circle r="5.8" fill="#1a73e8"/></g>
<circle cx="27" cy="6" r="9.3" fill="#8d7fd0" stroke="#c7bfee" stroke-width="1"/>
<path fill="#e5e1f7" d="M22 13 L26 2 Q27.5 0 29 2 L32 13 Z" opacity="0.85"/></svg>
<!-- vscode active -->
<div class="a" style="left:1372px;top:1146px;width:47px;height:48px;border-radius:6px;background:#eef0f7;box-shadow:0 0 0 0.5px #e2e6ee;"></div>
<svg style="left:1381px;top:1155px" width="30" height="30" viewBox="0 0 100 100">
<path fill="#0065a9" d="M96.46 10.8L75.86.9C73.47-.25 70.62.24 68.74 2.12L29.36 38.04 12.19 25.01c-1.6-1.21-3.84-1.11-5.32.24l-5.51 5.01c-1.820 1.65-1.82 4.51 0 6.16L16.25 50 1.36 63.58c-1.82 1.65-1.82 4.51 0 6.16l5.51 5.01c1.48 1.35 3.72 1.45 5.32.24l17.17-13.03 39.38 35.92c1.88 1.88 4.73 2.37 7.12 1.22l20.59-9.91c2.16-1.04 3.54-3.23 3.54-5.630V16.41c0-2.4-1.38-4.59-3.54-5.63zM75.02 72.7L45.11 50l29.91-22.7v45.4z"/>
<path fill="#007acc" d="M96.46 89.2L75.86 99.1c-2.38 1.15-5.24.66-7.12-1.22L1.36 36.42c-1.82-1.65-1.82-4.51 0-6.16l5.51-5.01c1.48-1.35 3.72-1.45 5.32-.24l81.3 61.68c2.72 2.06 6.64.12 6.64-3.29V83.2c0 2.4-1.38 4.59-3.54 5.63z" opacity="0.9"/>
<path fill="#1f9cf0" d="M75.86 99.13c-2.38 1.15-5.24.66-7.12-1.22 2.32 2.32 6.28.68 6.28-2.6V4.69c0-3.28-3.960-4.92-6.28-2.6 1.88-1.88 4.73-2.37 7.12-1.22l20.59 9.9c2.16 1.04 3.54 3.23 3.54 5.63v67.17c0 2.4-1.38 4.59-3.54 5.63l-20.59 9.93z"/></svg>
<div class="a" style="left:1386px;top:1190px;width:21px;height:4px;border-radius:2px;background:#0067c0;"></div>
<!-- running dots -->
<div class="a" style="left:842px;top:1190px;width:8px;height:4px;border-radius:2px;background:#7b8089;"></div>
<div class="a" style="left:897px;top:1190px;width:8px;height:4px;border-radius:2px;background:#7b8089;"></div>
<div class="a" style="left:1005px;top:1190px;width:8px;height:4px;border-radius:2px;background:#7b8089;"></div>
<div class="a" style="left:1061px;top:1190px;width:8px;height:4px;border-radius:2px;background:#7b8089;"></div>
<div class="a" style="left:1172px;top:1190px;width:8px;height:4px;border-radius:2px;background:#7b8089;"></div>
<div class="a" style="left:1227px;top:1190px;width:8px;height:4px;border-radius:2px;background:#7b8089;"></div>
<div class="a" style="left:1282px;top:1190px;width:8px;height:4px;border-radius:2px;background:#7b8089;"></div>
<div class="a" style="left:1337px;top:1190px;width:8px;height:4px;border-radius:2px;background:#7b8089;"></div>
<!-- tray -->
<svg style="left:1504px;top:1161px" width="20" height="16" viewBox="0 0 20 16"><polyline points="3.5,12 10,5.5 16.5,12" fill="none" stroke="#1b1b1b" stroke-width="1.6" stroke-linecap="round" stroke-linejoin="round"/></svg>
<svg style="left:1541px;top:1157px" width="26" height="26" viewBox="0 0 26 26"><g fill="none" stroke="#1b1b1b" stroke-width="1.4" stroke-linecap="round" stroke-linejoin="round"><path d="M4 12 Q4 4 12 4 Q18 4 20.5 8"/><polyline points="21,3.5 21,8.5 16,8.5"/><path d="M20 14 Q19 21 12 21 Q7 21 4.5 17"/><polyline points="4,22 4,17 9,17"/></g><circle cx="18.5" cy="18" r="4.8" fill="#0f6cd6"/></svg>
<svg style="left:1581px;top:1157px" width="26" height="26" viewBox="0 0 26 26"><path d="M5 19 Q1 19 1.5 14.5 Q2 11 6 11 Q7 5 13 5 Q18 5 19.5 10 Q23 10.5 23 14 Q23 18 20 19Z" fill="#8a8a8a" opacity="0.55" stroke="#4a4a4a" stroke-width="1.2"/><circle cx="16.5" cy="17.5" r="6" fill="#0f6cd6" stroke="#dfe4ee" stroke-width="1"/><rect x="15.6" y="16" width="1.9" height="5" fill="#fff"/><circle cx="16.5" cy="13.8" r="1.1" fill="#fff"/></svg>
<svg style="left:1622px;top:1158px" width="24" height="24" viewBox="0 0 24 24"><g fill="none" stroke="#1b1b1b" stroke-width="1.3"><polyline points="4,22.5 12,2.5 20,22.5"/><line x1="7" y1="15" x2="17" y2="15"/></g></svg>
<svg style="left:1669px;top:1157px" width="26" height="26" viewBox="0 0 26 26"><g fill="none" stroke="#1b1b1b" stroke-width="1.4"><circle cx="13" cy="13" r="9.8"/><path d="M14.5 5.5 V13 Q14.5 17.5 10 17.5 Q7.5 17.5 7 15.5" stroke-linecap="round"/></g></svg>
<svg style="left:1716px;top:1159px" width="26" height="22" viewBox="0 0 26 22"><g fill="none" stroke="#1b1b1b" stroke-width="1.5" stroke-linecap="round"><path d="M2.5 8 Q13 -1.5 23.5 8"/><path d="M5.5 11.5 Q13 5 20.5 11.5"/><path d="M9 15 Q13 11.5 17 15"/></g><circle cx="13" cy="18.3" r="1.6" fill="#1b1b1b"/></svg>
<svg style="left:1746px;top:1159px" width="26" height="22" viewBox="0 0 26 22"><g fill="none" stroke="#1b1b1b" stroke-width="1.4" stroke-linejoin="round"><path d="M3 8 H7 L12.5 3.5 V18.5 L7 14 H3 Z"/><path d="M16 8 Q18 11 16 14" stroke-linecap="round"/></g><path d="M19 5.5 Q23 11 19 16.5" fill="none" stroke="#9a9a9a" stroke-width="1.3" stroke-linecap="round"/></svg>
<svg style="left:1777px;top:1161px" width="26" height="18" viewBox="0 0 26 18"><rect x="2" y="3.5" width="18.5" height="11" rx="2.3" fill="none" stroke="#1b1b1b" stroke-width="1.4"/><rect x="4.3" y="5.8" width="9.5" height="6.4" fill="#1b1b1b"/><path d="M21.3 7 Q23.3 7 23.3 9 Q23.3 11 21.3 11Z" fill="#1b1b1b"/></svg>
<div class="a" style="left:1861px;top:1151px;font-size:16px;line-height:20px;color:#1b1b1b;white-space:pre;transform:scaleX(0.9);transform-origin:0 0;">13:29</div>
<div class="a" style="left:1819.5px;top:1170.5px;font-size:16px;line-height:20px;color:#1b1b1b;white-space:pre;transform:scaleX(0.96);transform-origin:0 0;">2025/12/27</div>

</body></html>
